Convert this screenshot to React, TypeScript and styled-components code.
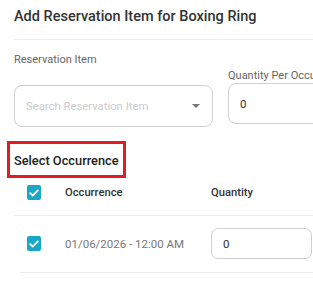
import React from 'react';
import styled, { createGlobalStyle } from 'styled-components';

const GlobalStyle = createGlobalStyle`
    html, body {
        margin: 0;
        padding: 0;
        background: #ffffff;
    }
    body {
        font-family: Roboto, "Liberation Sans", Arial, sans-serif;
        color: #333333;
    }
`;

const Page = styled.div`
    width: 313px;
    height: 293px;
    overflow: hidden;
    padding: 7px 0 0 14px;
    box-sizing: border-box;
`;

const Title = styled.h2`
    margin: 0;
    font-size: 14.5px;
    font-weight: 500;
    line-height: 20px;
    color: #333333;
    white-space: nowrap;
    padding-bottom: 12px;
    border-bottom: 1px solid #eeeeee;
    width: 400px;
`;

const FormRow = styled.div`
    display: flex;
    gap: 15px;
    align-items: flex-start;
`;

const Field = styled.div<{ $top: number; $labelGap: number }>`
    display: flex;
    flex-direction: column;
    flex-shrink: 0;
    padding-top: ${(p) => p.$top}px;

    & > label {
        margin-bottom: ${(p) => p.$labelGap}px;
    }
`;

const Label = styled.label`
    font-size: 11px;
    line-height: 16px;
    color: #666666;
    white-space: nowrap;
`;

const SelectBox = styled.div`
    width: 199px;
    height: 42px;
    box-sizing: border-box;
    border: 1px solid #d0d0d0;
    border-radius: 8px;
    display: flex;
    align-items: center;
    justify-content: space-between;
    padding: 0 11px 0 11px;
`;

const Placeholder = styled.span`
    font-size: 11.3px;
    color: #cccccc;
`;

const Caret = styled.span`
    width: 0;
    height: 0;
    border-left: 4px solid transparent;
    border-right: 4px solid transparent;
    border-top: 4px solid #777777;
    margin-right: 1px;
`;

const NumberBox = styled.div<{ $width: number; $height: number; $radius: number }>`
    width: ${(p) => p.$width}px;
    height: ${(p) => p.$height}px;
    box-sizing: border-box;
    border: 1px solid #d0d0d0;
    border-radius: ${(p) => p.$radius}px;
    display: flex;
    align-items: center;
    padding-left: 11px;
    font-size: 11.5px;
    color: #333333;
`;

const SectionTitle = styled.div`
    display: inline-block;
    margin: 14px 0 0 -7px;
    padding: 8px 4px 6px 4px;
    border: 3px solid #e31b23;
    font-size: 12.8px;
    font-weight: 500;
    line-height: 17px;
    color: #222222;
    white-space: nowrap;
`;

const Row = styled.div<{ $indent: number; $padTop: number; $padBottom: number }>`
    display: grid;
    grid-template-columns: ${(p) => 51 - p.$indent}px 146px 102px;
    align-items: center;
    margin-left: ${(p) => p.$indent}px;
    padding: ${(p) => p.$padTop}px 0 ${(p) => p.$padBottom}px 0;
    border-bottom: 1px solid #eeeeee;
    width: 400px;
`;

const CheckCell = styled.div<{ $indent: number }>`
    padding-left: ${(p) => 13 - p.$indent}px;
    display: flex;
`;

const Check = styled.span`
    width: 14px;
    height: 15px;
    border-radius: 2px;
    background: #1aa7c6;
    display: flex;
    align-items: center;
    justify-content: center;
`;

const HeadText = styled.span`
    font-size: 11.2px;
    font-weight: 500;
    color: #333333;
    white-space: nowrap;
`;

const DateText = styled.span`
    font-size: 11.5px;
    color: #777777;
    white-space: nowrap;
`;

const Tick = () => (
    <svg width="10" height="8" viewBox="0 0 10 8">
        <path d="M1.2 4.2 L3.8 6.6 L8.8 1.4" fill="none" stroke="#ffffff" strokeWidth="1.8" strokeLinecap="round" strokeLinejoin="round" />
    </svg>
);

const App = () => {
    return (
        <>
            <GlobalStyle />
            <Page>
                <Title>Add Reservation Item for Boxing Ring</Title>
                <FormRow>
                    <Field $top={12} $labelGap={17}>
                        <Label>Reservation Item</Label>
                        <SelectBox>
                            <Placeholder>Search Reservation Item</Placeholder>
                            <Caret />
                        </SelectBox>
                    </Field>
                    <Field $top={28} $labelGap={-1}>
                        <Label>Quantity Per Occurrence</Label>
                        <NumberBox $width={120} $height={41} $radius={8}>0</NumberBox>
                    </Field>
                </FormRow>
                <SectionTitle>Select Occurrence</SectionTitle>
                <Row $indent={0} $padTop={7} $padBottom={15}>
                    <CheckCell $indent={0}><Check><Tick /></Check></CheckCell>
                    <HeadText>Occurrence</HeadText>
                    <HeadText>Quantity</HeadText>
                </Row>
                <Row $indent={6} $padTop={12} $padBottom={13}>
                    <CheckCell $indent={6}><Check><Tick /></Check></CheckCell>
                    <DateText>01/06/2026 - 12:00 AM</DateText>
                    <NumberBox $width={101} $height={31} $radius={7}>0</NumberBox>
                </Row>
            </Page>
        </>
    );
};

export default App;
